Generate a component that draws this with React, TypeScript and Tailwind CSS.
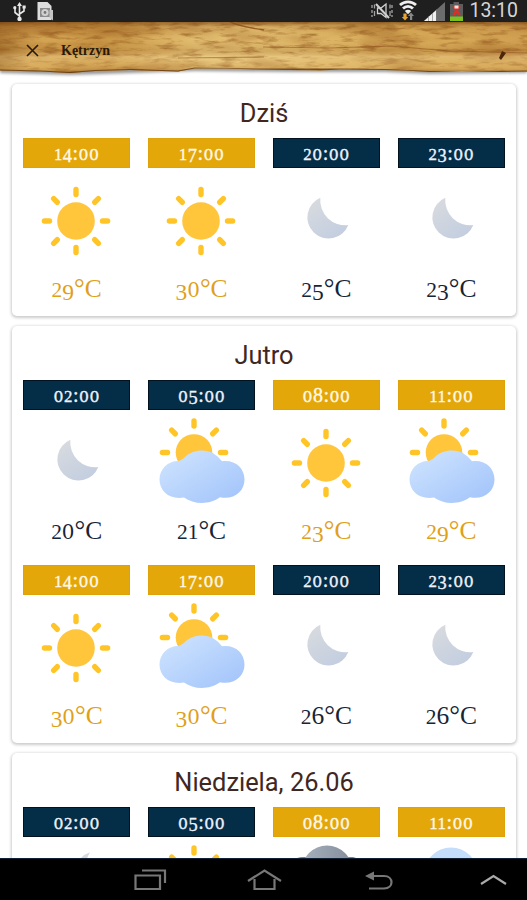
import type { ReactNode } from "react";

type Icon = "sun" | "moon" | "sunCloud" | "moonCloud" | "darkCloud" | "cloud";

type Slot = {
  time: string;
  temp: string;
  icon: Icon;
  night?: boolean;
};

const DAYS: { title: string; slots: Slot[] }[] = [
  {
    title: "Dziś",
    slots: [
      { time: "14:00", temp: "29°C", icon: "sun" },
      { time: "17:00", temp: "30°C", icon: "sun" },
      { time: "20:00", temp: "25°C", icon: "moon", night: true },
      { time: "23:00", temp: "23°C", icon: "moon", night: true },
    ],
  },
  {
    title: "Jutro",
    slots: [
      { time: "02:00", temp: "20°C", icon: "moon", night: true },
      { time: "05:00", temp: "21°C", icon: "sunCloud", night: true },
      { time: "08:00", temp: "23°C", icon: "sun" },
      { time: "11:00", temp: "29°C", icon: "sunCloud" },
      { time: "14:00", temp: "30°C", icon: "sun" },
      { time: "17:00", temp: "30°C", icon: "sunCloud" },
      { time: "20:00", temp: "26°C", icon: "moon", night: true },
      { time: "23:00", temp: "26°C", icon: "moon", night: true },
    ],
  },
  {
    title: "Niedziela, 26.06",
    slots: [
      { time: "02:00", temp: "", icon: "moonCloud", night: true },
      { time: "05:00", temp: "", icon: "sunCloud", night: true },
      { time: "08:00", temp: "", icon: "darkCloud" },
      { time: "11:00", temp: "", icon: "cloud" },
    ],
  },
];

// Old-style figures: 0-2 sit at x-height, 3/4/5/7/9 hang below the baseline
const glyphClass = (ch: string) => {
  if (ch === "0") return "font-['DejaVu_Serif',serif] text-[0.78em]";
  if (ch === "1" || ch === "2") return "text-[0.84em]";
  if ("34579".includes(ch)) return "relative top-[0.12em] text-[0.92em]";
  if (ch === "°") return "text-[1.05em]";
  return "";
};

const OldStyle = ({ text }: { text: string }) => (
  <>
    {text.split("").map((ch, i) => (
      <span key={i} className={`leading-none ${glyphClass(ch)}`}>
        {ch}
      </span>
    ))}
  </>
);

const Rays = ({ angles }: { angles: number[] }) => (
  <>
    {angles.map((a) => (
      <line
        key={a}
        x1="0"
        y1="-26.5"
        x2="0"
        y2="-31.6"
        stroke="#ffc527"
        strokeWidth="5.4"
        strokeLinecap="round"
        transform={`rotate(${a})`}
      />
    ))}
  </>
);

const CLOUD =
  "M30 51C33 50.5 34.5 49 37 47C41 43 47 40.5 54 40.5C62 40.5 69 44.5 74 51.3C87 49.5 96.5 58 96.5 69.5C96.5 81.5 86 90 72 87.3C67 91 60 93 54 93C47 93 41 91 36 87.5C22 90 11.5 81.5 11.5 69.5C11.5 59 20 51 30 51Z";

const WeatherIcon = ({ icon }: { icon: Icon }) => {
  const parts: Record<Icon, ReactNode> = {
    sun: (
      <g transform="translate(53 53)">
        <circle r="18.8" fill="#ffc53b" />
        <Rays angles={[0, 45, 90, 135, 180, 225, 270, 315]} />
      </g>
    ),
    moon: (
      <path d="M47.3 29.8A21.2 21.2 0 1 0 75.3 57A25 25 0 0 1 47.3 29.8Z" fill="url(#moonFill)" />
    ),
    sunCloud: (
      <>
        <g transform="translate(46 42.5)">
          <circle r="18.3" fill="#ffc53b" />
          <Rays angles={[0, 45, 90, 270, 315]} />
        </g>
        <path d={CLOUD} fill="url(#cloudFill)" />
      </>
    ),
    moonCloud: (
      <path d="M67 15.2A22 22 0 0 0 57 22H64A25 25 0 0 1 67 15.2Z" fill="#d5d9df" />
    ),
    darkCloud: (
      <>
        <path d="M20 60C8 40 14 20 30 20H80C92 22 96 45 86 60Z" fill="#718292" />
        <circle cx="54" cy="34" r="25.5" fill="url(#darkFill)" />
      </>
    ),
    cloud: <ellipse cx="53" cy="38" rx="27" ry="27.5" fill="#c3ddfb" />,
  };

  return (
    <svg viewBox="0 0 107 104" className="h-[104px] w-[107px]" aria-hidden="true">
      {parts[icon]}
    </svg>
  );
};

const SlotCell = ({ time, temp, icon, night }: Slot) => (
  <div className="flex h-[185px] flex-col items-center">
    <div
      className={`h-[30px] w-full whitespace-nowrap border text-center font-['Liberation_Serif',serif] text-[20px] leading-[29px] tracking-[0.5px] [-webkit-text-stroke:0.35px] ${
        night ? "border-[#02121e] bg-[#042d48] text-[#eef2fb]" : "border-[#dfa20a] bg-[#e4a70a] text-[#fff8e8]"
      }`}
    >
      <OldStyle text={time} />
    </div>
    <WeatherIcon icon={icon} />
    <div
      className={`h-[30px] whitespace-nowrap font-['Liberation_Serif',serif] text-[25.5px] leading-[34px] ${
        night ? "text-[#152536]" : "text-[#dfa01a]"
      }`}
    >
      <OldStyle text={temp} />
    </div>
  </div>
);

const StatusBar = () => (
  <div className="flex h-[22px] shrink-0 items-center bg-[#1f1f1f] pl-3 pr-[9px]">
    {/* usb + sim notifications */}
    <svg width="16" height="20" viewBox="0 0 16 20" fill="none" stroke="#e8e8e8" strokeWidth="1.6">
      <path d="M7.5 4v13M7.5 15L3 11.5V7.5M7.5 13L12 10V6" />
      <path d="M7.5 1L10 5H5Z" fill="#e8e8e8" stroke="none" />
      <circle cx="7.5" cy="18" r="2.2" fill="#e8e8e8" stroke="none" />
      <circle cx="2.8" cy="6.7" r="1.6" fill="#e8e8e8" stroke="none" />
      <path d="M10.5 4.5h3.2v3h-3.2z" fill="#e8e8e8" stroke="none" />
    </svg>
    <svg className="ml-2" width="18" height="20" viewBox="0 0 18 20">
      <path d="M1.5 1h10l4 4v14h-14z" fill="#dedede" />
      <path d="M4 7h10v9H4z" fill="#8c8c8c" />
      <circle cx="9" cy="11.5" r="3.6" fill="#d2d2d2" />
      <circle cx="9" cy="11.5" r="1.4" fill="#777" />
      <path d="M13.5 9h3.5v10.5l-3.5-3z" fill="#c5c5c5" />
    </svg>

    <div className="ml-auto flex items-center">
      {/* muted */}
      <svg width="24" height="20" viewBox="0 0 24 20" fill="none" stroke="#d0d0d0" strokeWidth="1.3">
        <path d="M2 4v3M2 9v3M2 14v2M22 4v3M22 9v3M22 14v2M4.5 3.500v4M4.5 10v5M20 3.500v4M20 10v5" opacity=".75" />
        <path d="M7.5 7H11L16 3V16.500L11 12.500H7.500Z" />
        <path d="M6 3L19 17" strokeWidth="2" />
      </svg>
      {/* wifi */}
      <svg className="ml-[5px]" width="18" height="22" viewBox="0 0 18 22" fill="none" stroke="#eee" strokeWidth="2.8">
        <path d="M1 5C5.5 .8 12.5 .8 17 5" />
        <path d="M4 8.6C7 5.6 11 5.6 14 8.6" />
        <path d="M5.8 11Q9 8.3 12.2 11L9 14.300Z" fill="#eee" stroke="none" />
        <path d="M6 20.5l-3.200-3.500h1.600V13.500h3.200V17h1.600z" fill="#e9a52a" stroke="none" />
        <path d="M11 20v-4h-2l3-3.500 3 3.500h-1.800v4z" fill="#888" stroke="none" />
      </svg>
      {/* signal */}
      <svg className="ml-[7px]" width="21" height="20" viewBox="0 0 21 20">
        <path d="M0 20L21 1V20Z" fill="#6c6c6c" />
        <path d="M0 20L12 9.2V20Z" fill="#f0f0f0" />
        <path d="M4.5 15v5M8.5 12v8M12.5 8v12" stroke="#777" strokeWidth=".6" />
      </svg>
      {/* battery */}
      <svg className="ml-[4px]" width="15" height="20" viewBox="0 0 15 20">
        <path d="M4.5 1h5.5v2H14v17H1V3h3.5z" fill="#5d5d5d" />
        <path d="M1 15.5h13V20H1z" fill="#7cc21e" />
        <path d="M4.5 5l6 9M10.5 5l-6 9" stroke="#d53128" strokeWidth="2.8" />
        <path d="M5.5 4.5h4v3h-4z" fill="#f4e4e1" />
      </svg>
      <span className="ml-[5px] font-[Roboto,sans-serif] text-[19.5px] leading-[22px] text-[#d6d6d6]">13:10</span>
    </div>
  </div>
);

const Header = () => (
  <header className="relative z-10 flex h-[50px] shrink-0 items-center">
    {/* wooden plank */}
    <svg className="absolute inset-0 -z-10 h-[60px] w-full" viewBox="0 0 527 60" preserveAspectRatio="none">
      <defs>
        <linearGradient id="wood" x1="0" x2="1" y1="0" y2="0">
          <stop offset="0" stopColor="#a87530" />
          <stop offset=".06" stopColor="#d3a352" />
          <stop offset=".2" stopColor="#cb9846" />
          <stop offset=".38" stopColor="#e3bf72" />
          <stop offset=".55" stopColor="#dfb96b" />
          <stop offset=".78" stopColor="#d8ab58" />
          <stop offset="1" stopColor="#cf9d4e" />
        </linearGradient>
        <linearGradient id="woodShade" x1="0" x2="0" y1="0" y2="1">
          <stop offset="0" stopColor="#6d3a0c" stopOpacity=".65" />
          <stop offset=".1" stopColor="#8a521a" stopOpacity=".12" />
          <stop offset=".35" stopColor="#e8c273" stopOpacity=".1" />
          <stop offset=".54" stopColor="#7c4716" stopOpacity=".14" />
          <stop offset=".68" stopColor="#f6dda0" stopOpacity=".35" />
          <stop offset=".9" stopColor="#e9c77b" stopOpacity=".25" />
          <stop offset="1" stopColor="#794411" stopOpacity=".5" />
        </linearGradient>
        <filter id="grain" x="0" y="0" width="100%" height="100%" colorInterpolationFilters="sRGB">
          <feTurbulence type="fractalNoise" baseFrequency="0.05 0.22" numOctaves="4" seed="21" />
          <feColorMatrix values="0 0 0 0 .55  0 0 0 0 .31  0 0 0 0 .09  3 0 0 0 -1.45" />
        </filter>
        <filter id="patches" x="0" y="0" width="100%" height="100%" colorInterpolationFilters="sRGB">
          <feTurbulence type="fractalNoise" baseFrequency="0.014 0.05" numOctaves="3" seed="5" />
          <feColorMatrix values="0 0 0 0 .6  0 0 0 0 .36  0 0 0 0 .12  3 0 0 0 -1.4" />
        </filter>
        <filter id="soft" x="-5%" y="-20%" width="110%" height="150%">
          <feGaussianBlur stdDeviation="1.6" />
        </filter>
        <clipPath id="plank">
          <path d="M0 0H527V49.5L500 50L462 49L430 50L405 48.5L385 48L340 47.5L320 48.5L290 48L255 47.5L225 46.5L195 46.5L178 49.5L130 48L95 49L70 51L40 49.5L0 48.5Z" />
        </clipPath>
      </defs>
      <path d="M0 20H527V51L430 52L385 50L290 50L195 49L70 53L0 51Z" fill="#000" opacity=".4" filter="url(#soft)" />
      <g clipPath="url(#plank)">
        <rect width="527" height="60" fill="url(#wood)" />
        <rect width="527" height="60" filter="url(#patches)" opacity=".45" />
        <rect width="527" height="60" filter="url(#grain)" opacity=".6" />
        <rect width="527" height="51" fill="url(#woodShade)" />
        <path d="M230 0Q243 5 264 8" stroke="#8c4a18" strokeWidth="1.4" fill="none" opacity=".8" />
        <path d="M178 36L264 35M263 25L330 26L390 24L450 29L527 31" stroke="#8c4a18" strokeWidth="1.1" fill="none" opacity=".5" />
        <path d="M502 29L506 31L501 38L499 36Z" fill="#4c2609" />
        <path d="M0 48.5L40 49.5L70 51L95 49L130 48L178 49.5L195 46.5L255 47.5L340 47.5L385 48L430 50L527 49.5" stroke="#5d330d" strokeWidth="1.8" fill="none" opacity=".75" />
      </g>
    </svg>
    <svg className="ml-[26px] mt-[7px]" width="13" height="13" viewBox="0 0 13 13" stroke="#2a1a08" strokeWidth="1.6">
      <path d="M1 1L12 12M12 1L1 12" />
    </svg>
    <h1 className="ml-[22px] mt-[7px] font-['Liberation_Serif',serif] text-[14px] font-bold leading-none text-[#2b1806]">
      Kętrzyn
    </h1>
  </header>
);

const NavBar = () => (
  <nav className="flex h-[42px] shrink-0 border-t border-[#102236] bg-black">
    <svg width="527" height="41" viewBox="0 859 527 41" fill="none" stroke="#777" strokeWidth="2.2">
      <path d="M135.5 875.5H160V889H135.5ZM142 870.5H165V883" />
      <path d="M248 881L264.5 870.5L281 881M254.5 879V889H274.5V879" />
      <path d="M372 876H384C394 876 394 888.5 384 888.5H369" />
      <path d="M365 876L374 871.5V880.5Z" fill="#777" stroke="none" />
      <path d="M481 884L493.5 876L506 884" stroke="#aaa" />
    </svg>
  </nav>
);

const App = () => (
  <div className="flex h-[900px] w-[527px] flex-col overflow-hidden bg-white">
    <svg className="absolute h-0 w-0" aria-hidden="true">
      <defs>
        <linearGradient id="moonFill" x1="0" y1="0" x2=".7" y2="1">
          <stop offset="0" stopColor="#dadcdf" />
          <stop offset="1" stopColor="#c3cedf" />
        </linearGradient>
        <linearGradient id="cloudFill" x1="0" y1="0" x2="1" y2="1">
          <stop offset=".1" stopColor="#cce2fe" />
          <stop offset=".9" stopColor="#a5c6fb" />
        </linearGradient>
        <linearGradient id="darkFill" x1="0" y1="0" x2="1" y2="0">
          <stop offset="0" stopColor="#a7b0bd" />
          <stop offset="1" stopColor="#848d9b" />
        </linearGradient>
      </defs>
    </svg>

    <StatusBar />
    <Header />

    <main className="flex min-h-0 flex-1 flex-col gap-[10px] overflow-hidden pl-3 pr-[11px] pt-3">
      {DAYS.map((day) => (
        <section
          key={day.title}
          className="shrink-0 rounded-[5px] bg-white px-[11px] shadow-[0_1px_3px_1px_rgba(0,0,0,0.2)]"
        >
          <h2 className="flex h-[54px] items-center justify-center pt-[5px] font-[Roboto,sans-serif] text-[25.4px] leading-none text-[#40271f]">
            {day.title}
          </h2>
          <div className="-mb-[7px] grid grid-cols-4 gap-x-[17.5px]">
            {day.slots.map((slot) => (
              <SlotCell key={slot.time} {...slot} />
            ))}
          </div>
        </section>
      ))}
    </main>

    <NavBar />
  </div>
);

export default App;
